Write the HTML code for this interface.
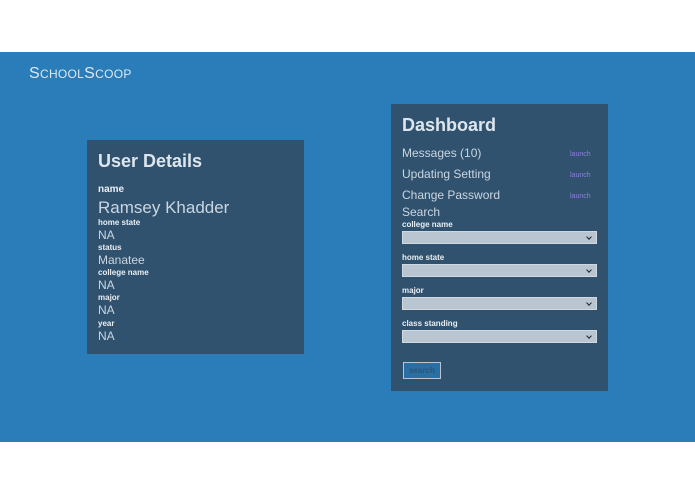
<!DOCTYPE html>
<html><head><style>
*{margin:0;padding:0;box-sizing:border-box}
body{width:695px;height:494px;background:#fff;position:relative;font-family:"Liberation Sans",sans-serif;overflow:hidden}
.band{position:absolute;left:0;top:52px;width:695px;height:390px;background:#2a7db8}
.t{position:absolute;white-space:nowrap;color:#dde6ee;line-height:1}
.panel{position:absolute;background:#31526e}
.lbl{font-weight:bold;font-size:8px;color:#e8eef3}
.val{font-size:12px;color:#c9d6e1}
.sel{position:absolute;left:402px;width:195px;height:13px;background:#b9c6d2;border:1px solid #cfd9e2}
.sel:after{content:"";position:absolute;right:5px;top:3px;width:3px;height:3px;border-right:1.5px solid #223;border-bottom:1.5px solid #223;transform:rotate(45deg)}
.la{font-size:7px;color:#8d7fe0;left:570px}
</style></head><body>
<div class="band"></div>
<div class="t" style="left:29px;top:66px;font-size:16px;color:#dfe8ef;letter-spacing:0.3px">S<span style="font-size:12px">CHOOL</span>S<span style="font-size:12px">COOP</span></div>
<div class="panel" style="left:87px;top:140px;width:217px;height:214px"></div>
<div class="t" style="left:98px;top:152px;font-size:18px;font-weight:bold">User Details</div>
<div class="t lbl" style="left:98px;top:185px;font-size:10px">name</div>
<div class="t val" style="left:98px;top:199px;font-size:17px">Ramsey Khadder</div>
<div class="t lbl" style="left:98px;top:219px">home state</div>
<div class="t val" style="left:98px;top:229px">NA</div>
<div class="t lbl" style="left:98px;top:244px">status</div>
<div class="t val" style="left:98px;top:254px">Manatee</div>
<div class="t lbl" style="left:98px;top:269px">college name</div>
<div class="t val" style="left:98px;top:279px">NA</div>
<div class="t lbl" style="left:98px;top:294px">major</div>
<div class="t val" style="left:98px;top:304px">NA</div>
<div class="t lbl" style="left:98px;top:320px">year</div>
<div class="t val" style="left:98px;top:330px">NA</div>

<div class="panel" style="left:391px;top:104px;width:217px;height:287px"></div>
<div class="t" style="left:402px;top:116px;font-size:18px;font-weight:bold">Dashboard</div>
<div class="t val" style="left:402px;top:147px">Messages (10)</div>
<div class="t val" style="left:402px;top:168px">Updating Setting</div>
<div class="t val" style="left:402px;top:189px">Change Password</div>
<div class="t la" style="top:151px">launch</div>
<div class="t la" style="top:172px">launch</div>
<div class="t la" style="top:193px">launch</div>
<div class="t val" style="left:402px;top:206px">Search</div>
<div class="t lbl" style="left:402px;top:221px">college name</div>
<div class="sel" style="top:231px"></div>
<div class="t lbl" style="left:402px;top:254px">home state</div>
<div class="sel" style="top:264px"></div>
<div class="t lbl" style="left:402px;top:287px">major</div>
<div class="sel" style="top:297px"></div>
<div class="t lbl" style="left:402px;top:320px">class standing</div>
<div class="sel" style="top:330px"></div>
<div style="position:absolute;left:403px;top:362px;width:38px;height:17px;border:1px solid #b9c6d2;background:#2a6fa3;color:#2d5478;font-size:8px;font-weight:bold;text-align:center;line-height:15px">search</div>
</body></html>
